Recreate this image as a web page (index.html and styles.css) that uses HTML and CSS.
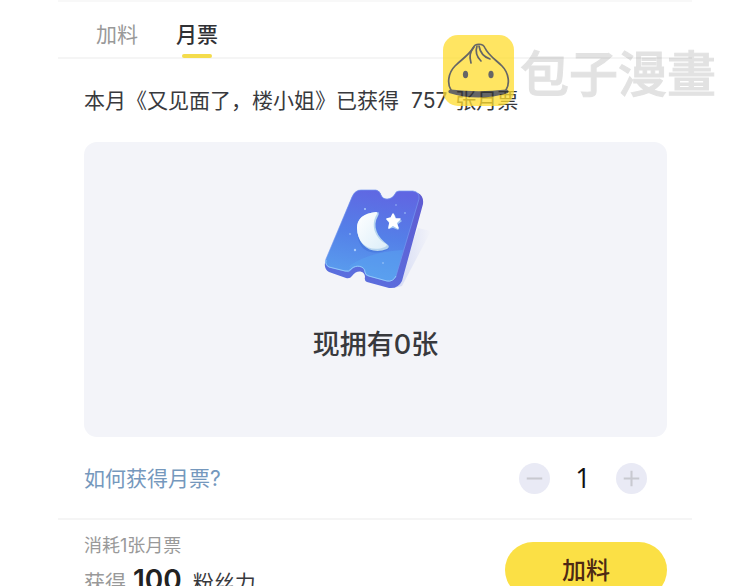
FILE: index.html
```html
<!DOCTYPE html>
<html lang="zh-CN">
<head>
<meta charset="utf-8">
<meta name="viewport" content="width=device-width, initial-scale=1">
<title>月票</title>
<link rel="stylesheet" href="styles.css">
</head>
<body>
<main class="sheet">
  <nav class="tabs">
    <button class="tab" type="button">加料</button>
    <button class="tab tab-active" type="button">月票</button>
  </nav>

  <section class="content">
    <p class="summary"><span>本月《又见面了，楼小姐》已获得</span><span class="count">757</span><span>张月票</span></p>

    <div class="panel">
      <svg class="ticket" viewBox="0 0 130 130" aria-hidden="true">
        <defs>
          <linearGradient id="face" x1="0.6" y1="0" x2="0.4" y2="1">
            <stop offset="0" stop-color="#6066e2"/>
            <stop offset="0.5" stop-color="#5480e8"/>
            <stop offset="1" stop-color="#5a9fee"/>
          </linearGradient>
          <linearGradient id="side" x1="0.8" y1="0" x2="0.2" y2="1">
            <stop offset="0" stop-color="#5f5cd2"/>
            <stop offset="1" stop-color="#5a70df"/>
          </linearGradient>
          <linearGradient id="moon" x1="0" y1="0" x2="1" y2="1">
            <stop offset="0" stop-color="#ffffff"/>
            <stop offset="1" stop-color="#dceef9"/>
          </linearGradient>
          <linearGradient id="shadow" x1="0" y1="0" x2="1" y2="0">
            <stop offset="0" stop-color="#d3d9f4"/>
            <stop offset="1" stop-color="#f3f4f9"/>
          </linearGradient>
        </defs>
        <path fill="url(#shadow)" d="M107 58 120 61 91 116 83 118Z"/>
        <path fill="url(#side)" d="M50 20H65Q69 21 70 25C72 31 81 30 84 24Q85 22 88 22L107 23Q113 26 112 34L91 111Q87 119 78 118L56 112Q53 111 54 107C54 101 46 99 41 106Q39 109 35 108L18 102Q13 99 14 93L41 27Q44 20 50 20Z"/>
        <path fill="url(#face)" stroke="#7599f0" stroke-width="0.7" d="M50 20H65Q69 21 70 25C72 31 81 30 84 24Q85 21 88 21H102Q109 22 108 29L85 106Q82 112 76 111L57 106Q54 105 54 102C54 96 44 94 40 100Q38 103 34 101L18 97Q13 94 15 89L41 27Q44 20 50 20Z"/>
        <path fill="#5ba7f1" opacity="0.45" d="M38 96Q58 82 92 80L85 106Q82 111 76 110L57 105Q54 104 54 101C53 96 44 94 40 99Z"/>
        <path fill="none" stroke="#8fc9fa" stroke-width="1" d="M15 90Q14 95 18 97L34 101Q38 102 40 99C45 94 54 96 54 102Q54 105 58 106L76 111Q82 112 85 106"/>
        <path fill="#3d6ed5" opacity="0.5" d="M64 44C45 47 43 66 51 77C58 85 71 83 78 79L75 74C62 68 58 58 64 44Z"/>
        <path fill="#b6d5ef" d="M65 42Q69 43 67 46C61 56 66 67 77 75Q79 77 76 79C61 85 47 77 46 58Q46 44 65 42Z"/>
        <path fill="url(#moon)" d="M65 42Q67 42 66 44C59 55 64 68 75 74Q77 75 74 77C59 83 46 74 46 58Q46 44 65 42Z"/>
        <path fill="#9fc4f2" stroke="#9fc4f2" stroke-width="1.5" stroke-linejoin="round" d="m83 45 2 5 5 1-4 3 1 5-5-2-4 1 1-5-3-4 5-1Z"/>
        <path fill="#fff" stroke="#fff" stroke-width="1.5" stroke-linejoin="round" d="m82 44 2 5 5 0-4 4 2 5-5-3-4 3 1-6-3-3 4-1Z"/>
        <g fill="#a9ccfa"><circle cx="54" cy="39" r="1"/><circle cx="85" cy="35" r=".7"/><circle cx="67" cy="43" r=".8"/><circle cx="94" cy="43" r=".8"/><circle cx="39" cy="64" r=".8"/><circle cx="44" cy="80" r="1.2"/><circle cx="72" cy="93" r=".8"/></g>
      </svg>
      <p class="owned">现拥有0张</p>
    </div>

    <div class="row">
      <a class="help" href="#">如何获得月票?</a>
      <div class="stepper">
        <button class="step" type="button" aria-label="减少"><svg viewBox="0 0 30 30"><path d="M7.500 15h15"/></svg></button>
        <output class="quantity">1</output>
        <button class="step" type="button" aria-label="增加"><svg viewBox="0 0 30 30"><path d="M7.500 15h15M15 7.500v15"/></svg></button>
      </div>
    </div>
  </section>

  <footer class="checkout">
    <div>
      <p class="cost">消耗1张月票</p>
      <p class="reward"><span>获得</span><strong>100</strong><span class="unit">粉丝力</span></p>
    </div>
    <button class="submit" type="button">加料</button>
  </footer>

  <div class="watermark">
    <svg class="logo" viewBox="0 0 71 71" aria-hidden="true">
      <rect width="71" height="71" rx="15" fill="#ffdd2e"/>
      <g fill="none" stroke="#333" stroke-width="1.700" stroke-linecap="round" stroke-linejoin="round">
        <path d="M8 55C4 49 5 38 12 31C19 24 26 20 30 13C32 8 40 8 42 13C45 20 53 25 59 31C66 38 67 49 63 55"/>
        <path d="M31 12C27 17 26 21 28 28M34 11C32 17 34 22 38 26M36 11C37 17 41 22 47 24"/>
      </g>
      <ellipse cx="22.500" cy="39.500" rx="2.600" ry="3.800" fill="#333"/>
      <ellipse cx="48" cy="39.500" rx="2.600" ry="3.800" fill="#333"/>
      <path fill="#333" d="M8 54.500Q35.500 58 63 54.500Q67 55 65 58Q35.500 67 6 58Q4 55 8 54.500Z"/>
    </svg>
    <span class="brand" lang="zh-TW">包子漫畫</span>
  </div>
</main>
</body>
</html>
```

FILE: styles.css
```css
* {
  box-sizing: border-box;
}

html {
  overflow: hidden;
}

body {
  margin: 0;
  background: #fff;
  color: #38393d;
  font-family: Inter, "Noto Sans CJK SC", sans-serif;
  font-size: 21px;
  line-height: 32px;
}

p {
  margin: 0;
}

button {
  padding: 0;
  border: 0;
  font: inherit;
  cursor: pointer;
}

.sheet {
  position: relative;
  max-width: 634px;
  margin: 0 auto;
  border-top: 2px solid #f8f8f8;
}

.tabs {
  display: flex;
  gap: 38px;
  height: 57px;
  padding: 0 38px;
  border-bottom: 2px solid #f5f5f5;
}

.tab {
  position: relative;
  padding-top: 10px;
  background: none;
  color: #999;
}

.tab-active {
  color: #303135;
  font-weight: 500;
}

.tab-active::after {
  content: "";
  position: absolute;
  bottom: -1px;
  left: 50%;
  width: 30px;
  height: 4px;
  margin-left: -15px;
  border-radius: 2px;
  background: #f4dc4c;
}

.content {
  padding: 26px 25px 24px 26px;
}

.summary {
  display: flex;
  gap: 8px;
}

.count {
  margin-left: 4px;
}

.panel {
  display: flex;
  flex-direction: column;
  align-items: center;
  margin-top: 25px;
  padding: 28px 0 72px;
  border-radius: 13px;
  background: #f3f4f9;
}

.ticket {
  width: 130px;
  height: 130px;
}

.owned {
  margin-top: 25px;
  font-size: 27px;
  font-weight: 500;
  line-height: 40px;
}

.row {
  display: flex;
  align-items: center;
  justify-content: space-between;
  margin-top: 25px;
  padding-right: 20px;
}

.help {
  padding-top: 2px;
  color: #7598bd;
  font-size: 21px;
  line-height: 30px;
  text-decoration: none;
}

.stepper {
  display: flex;
  align-items: center;
}

.step {
  width: 31px;
  height: 31px;
  border-radius: 50%;
  background: #e9eaf5;
}

.step svg {
  display: block;
  fill: none;
  stroke: #c8c9d0;
  stroke-width: 2;
}

.quantity {
  width: 66px;
  color: #111;
  font-family: "Open Sans", sans-serif;
  font-size: 27px;
  text-align: center;
}

.checkout {
  display: flex;
  align-items: flex-start;
  justify-content: space-between;
  padding: 11px 25px 0 26px;
  border-top: 2px solid #f5f5f5;
}

.cost {
  padding-top: 1px;
  color: #999;
  font-size: 18px;
  line-height: 28px;
}

.reward {
  display: flex;
  align-items: baseline;
  gap: 7px;
  color: #999;
  line-height: 40px;
}

.reward strong {
  color: #222;
  font-size: 28px;
  font-weight: 600;
}

.unit {
  margin-left: 4px;
  color: #38393d;
}

.submit {
  width: 162px;
  height: 56px;
  margin-top: 11px;
  padding-top: 2px;
  border-radius: 28px;
  background: #fbe045;
  color: #4e2914;
  font-size: 24px;
  font-weight: 500;
}

.watermark {
  position: absolute;
  top: 33px;
  right: -24px;
  display: flex;
  align-items: center;
  gap: 6px;
  pointer-events: none;
}

.logo {
  width: 71px;
  height: 71px;
  opacity: 0.75;
}

.brand {
  color: #000;
  font-family: "Noto Sans CJK TC", sans-serif;
  font-size: 49px;
  font-weight: 500;
  line-height: 71px;
  opacity: 0.11;
  -webkit-text-stroke: 1px #000;
}
```
